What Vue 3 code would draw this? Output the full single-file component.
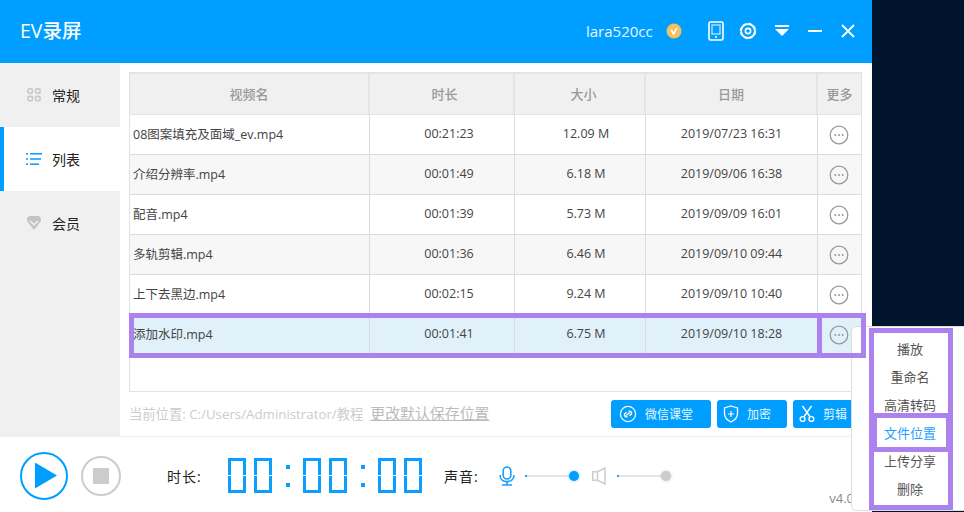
<script setup>
const navItems = [
  { label: "常规", icon: "grid" },
  { label: "列表", icon: "list", active: true },
  { label: "会员", icon: "gem" },
];

const videos = [
  { name: "08图案填充及面域_ev.mp4", time: "00:21:23", size: "12.09 M", date: "2019/07/23 16:31" },
  { name: "介绍分辨率.mp4", time: "00:01:49", size: "6.18 M", date: "2019/09/06 16:38" },
  { name: "配音.mp4", time: "00:01:39", size: "5.73 M", date: "2019/09/09 16:01" },
  { name: "多轨剪辑.mp4", time: "00:01:36", size: "6.46 M", date: "2019/09/10 09:44" },
  { name: "上下去黑边.mp4", time: "00:02:15", size: "9.24 M", date: "2019/09/10 10:40" },
  { name: "添加水印.mp4", time: "00:01:41", size: "6.75 M", date: "2019/09/10 18:28", selected: true },
];

const menu = ["播放", "重命名", "高清转码", "文件位置", "上传分享", "删除"];
const clock = [2, 2, 2];
</script>

<template>
  <div class="page">
    <div class="window">
      <header class="topbar">
        <div class="logo">EV录屏</div>
        <div class="user">lara520cc</div>
        <svg class="medal" width="16" height="16" viewBox="0 0 16 16">
          <circle cx="8" cy="8" r="7.5" fill="#f6c05f" />
          <path d="M5 6.5 L7.6 11 L10.8 5" fill="none" stroke="#fff" stroke-width="1.6" />
        </svg>
        <svg class="tool tablet" width="16" height="20" viewBox="0 0 16 20">
          <rect x="1" y="1" width="14" height="18" rx="1.5" fill="none" stroke="#fff" stroke-width="1.6" />
          <rect x="4" y="4" width="8" height="9" fill="none" stroke="#cfeaff" stroke-width="1.2" />
          <circle cx="8" cy="16" r="1" fill="#fff" />
        </svg>
        <svg class="tool gear" width="18" height="18" viewBox="0 0 18 18">
          <circle cx="9" cy="9" r="7.2" fill="none" stroke="#fff" stroke-width="2" stroke-dasharray="4.6 1" />
          <circle cx="9" cy="9" r="6.8" fill="none" stroke="#fff" stroke-width="1.6" />
          <circle cx="9" cy="9" r="2.6" fill="none" stroke="#fff" stroke-width="1.6" />
        </svg>
        <svg class="tool drop" width="16" height="12" viewBox="0 0 16 12">
          <rect x="1" y="0" width="14" height="2" fill="#fff" />
          <path d="M1 4 H15 L8 11 Z" fill="#fff" />
        </svg>
        <svg class="tool minus" width="14" height="12" viewBox="0 0 14 12">
          <rect x="0" y="5" width="14" height="2" fill="#fff" />
        </svg>
        <svg class="tool close" width="14" height="14" viewBox="0 0 14 14">
          <path d="M1 1 L13 13 M13 1 L1 13" stroke="#fff" stroke-width="1.8" fill="none" />
        </svg>
      </header>

      <div class="body">
        <nav class="sidebar">
          <div v-for="item in navItems" :key="item.label" class="nav-item" :class="{ active: item.active }">
            <svg v-if="item.icon === 'grid'" class="nav-icon" width="16" height="16" viewBox="0 0 16 16">
              <g fill="none" stroke="#c8c8c8" stroke-width="1.6">
                <rect x="2" y="1.8" width="4.4" height="4.4" rx="1.2" />
                <rect x="9.6" y="1.8" width="4.4" height="4.4" rx="1.2" />
                <rect x="2" y="9.4" width="4.4" height="4.4" rx="1.2" />
                <rect x="9.6" y="9.4" width="4.4" height="4.4" rx="1.2" />
              </g>
            </svg>
            <svg v-else-if="item.icon === 'list'" class="nav-icon" width="16" height="16" viewBox="0 0 16 16">
              <g fill="#1a9fff">
                <rect x="0" y="2" width="2" height="1.6" />
                <rect x="4" y="2" width="12" height="1.6" />
                <rect x="0" y="7.2" width="2" height="1.6" />
                <rect x="4" y="7.2" width="11" height="1.6" />
                <rect x="0" y="12.4" width="2" height="1.6" />
                <rect x="4" y="12.4" width="9" height="1.6" />
              </g>
            </svg>
            <svg v-else class="nav-icon" width="16" height="16" viewBox="0 0 16 16">
              <path d="M4 1 H12 C13.5 1 15 2.5 15 4.5 C15 6 14.4 7 13.5 8 L8 15 L2.5 8 C1.6 7 1 6 1 4.5 C1 2.5 2.5 1 4 1 Z" fill="#c4c4c4" />
              <path d="M4 6 L8 9.6 L12 6" fill="none" stroke="#f0f0f0" stroke-width="1.6" />
            </svg>
            <span>{{ item.label }}</span>
          </div>
        </nav>

        <main class="main">
          <div class="table">
            <div class="row head">
              <div class="cell">视频名</div>
              <div class="cell time">时长</div>
              <div class="cell size">大小</div>
              <div class="cell">日期</div>
              <div class="cell">更多</div>
            </div>
            <div v-for="(v, i) in videos" :key="v.name" class="row" :class="{ alt: i % 2 === 1, selected: v.selected }">
              <div class="cell name">{{ v.name }}</div>
              <div class="cell time">{{ v.time }}</div>
              <div class="cell size">{{ v.size }}</div>
              <div class="cell">{{ v.date }}</div>
              <div class="cell more">
                <svg width="20" height="20" viewBox="0 0 20 20">
                  <circle cx="10" cy="10" r="8.8" fill="none" stroke="#999" stroke-width="1.3" />
                  <circle cx="6.4" cy="10" r="1" fill="#999" />
                  <circle cx="10" cy="10" r="1" fill="#999" />
                  <circle cx="13.6" cy="10" r="1" fill="#999" />
                </svg>
              </div>
            </div>
          </div>

          <div class="actions">
            <div class="path">当前位置: C:/Users/Administrator/教程<a class="change">更改默认保存位置</a></div>
            <button class="btn wide">
              <svg width="18" height="18" viewBox="0 0 18 18">
                <circle cx="9" cy="9" r="7.6" fill="none" stroke="#fff" stroke-width="1.2" />
                <path d="M9.4 6.4 A2.1 2.1 0 0 1 12.4 8.9 L10.6 10.8 M8.6 11.6 A2.1 2.1 0 0 1 5.6 9.1 L7.4 7.2 M7.4 10.6 L10.6 7.4" fill="none" stroke="#fff" stroke-width="1.4" />
              </svg>
              微信课堂
            </button>
            <button class="btn">
              <svg width="16" height="18" viewBox="0 0 16 18">
                <path d="M8 1 L14.5 3 V9 C14.5 13 11 15.5 8 17 C5 15.5 1.5 13 1.5 9 V3 Z" fill="none" stroke="#fff" stroke-width="1.3" />
                <path d="M8 6 V12 M5 9 H11" stroke="#fff" stroke-width="1.2" />
              </svg>
              加密
            </button>
            <button class="btn">
              <svg width="16" height="18" viewBox="0 0 16 18">
                <circle cx="3.6" cy="14" r="2.4" fill="none" stroke="#fff" stroke-width="1.4" />
                <circle cx="12.4" cy="14" r="2.4" fill="none" stroke="#fff" stroke-width="1.4" />
                <path d="M4.8 12 L12.5 1 M11.2 12 L3.5 1" stroke="#fff" stroke-width="1.4" fill="none" />
              </svg>
              剪辑
            </button>
          </div>
        </main>
      </div>

      <footer class="footer">
        <div class="play"><span class="triangle"></span></div>
        <div class="stop"><span class="square"></span></div>
        <div class="label time-label">时长:</div>
        <div class="clock" role="timer" aria-label="00:00:00">
          <template v-for="(count, i) in clock" :key="i">
            <div v-if="i > 0" class="colon"><i></i><i></i></div>
            <div class="pair">
              <span v-for="j in count" :key="j" class="digit"></span>
            </div>
          </template>
        </div>
        <div class="label sound-label">声音:</div>
        <svg class="mic" width="16" height="20" viewBox="0 0 16 20">
          <rect x="4.2" y="1" width="7.6" height="12" rx="3.8" fill="none" stroke="#1a9fff" stroke-width="1.6" />
          <path d="M1 9 C1 13 4 15.6 8 15.6 C12 15.6 15 13 15 9" fill="none" stroke="#1a9fff" stroke-width="1.6" />
          <path d="M8 15.6 V18.6 M3 19 H13" stroke="#1a9fff" stroke-width="1.6" fill="none" />
        </svg>
        <div class="slider"><span class="knob"></span></div>
        <svg class="speaker" width="14" height="18" viewBox="0 0 14 18">
          <path d="M0.8 4.8 H5.5 V13.2 H0.8 Z M5.5 4.8 L13 1 V17 L5.5 13.2" fill="none" stroke="#cfcfcf" stroke-width="1.6" />
        </svg>
        <div class="slider off"><span class="knob"></span></div>
        <div class="version">v4.0</div>
      </footer>
    </div>

    <div class="popup">
      <div v-for="m in menu" :key="m" class="menu-item" :class="{ current: m === '文件位置' }">{{ m }}</div>
    </div>

    <div class="mark mark-row"></div>
    <div class="mark mark-more"></div>
    <div class="mark mark-menu"></div>
    <div class="mark mark-item"></div>
  </div>
</template>

<style>
html,
body {
  margin: 0;
  background: #00142e;
}
</style>

<style scoped>
.page {
  position: relative;
  width: 964px;
  height: 512px;
  overflow: hidden;
  background: #00142e;
  font-family: "Open Sans", "Noto Sans CJK SC", sans-serif;
}

.window {
  width: 872px;
  height: 512px;
  display: flex;
  flex-direction: column;
  background: #fff;
}

.topbar {
  height: 63px;
  flex: none;
  box-sizing: border-box;
  padding: 0 0 2px 20px;
  display: flex;
  align-items: center;
  background: #009fff;
  color: #fff;
}

.logo {
  font-size: 19.5px;
  font-weight: 500;
  width: 566px;
  margin-bottom: 2px;
}

.user {
  font-size: 15px;
  width: 80px;
  color: #e8f6ff;
}

.tool {
  flex: none;
}

.tablet {
  margin-left: 26px;
}

.gear {
  margin-left: 15px;
}

.drop {
  margin-left: 17px;
}

.minus {
  margin-left: 18px;
}

.close {
  margin-left: 19px;
}

.body {
  flex: 1;
  min-height: 0;
  display: flex;
}

.sidebar {
  width: 120px;
  flex: none;
  background: #f0f0f0;
}

.nav-item {
  height: 64px;
  display: flex;
  align-items: center;
  padding-left: 26px;
  gap: 10px;
  font-size: 14px;
  color: #222;
}

.nav-item.active {
  background: #fff;
  box-shadow: inset 4px 0 0 #009fff;
}

.main {
  flex: 1;
  min-width: 0;
  padding: 9px 9px 0 9px;
  display: flex;
  flex-direction: column;
}

.table {
  width: 733px;
  height: 320px;
  box-sizing: border-box;
  border: 1px solid #e2e2e2;
  border-top: 0;
}

.row {
  display: grid;
  grid-template-columns: 240px 145px 131px 172px 1fr;
  height: 40px;
  box-sizing: border-box;
  border-bottom: 1px solid #dcdcdc;
  font-size: 12.5px;
  color: #444;
}

.row.head {
  height: 43px;
  background: #f0f0f0;
  color: #999;
  font-size: 13px;
  font-weight: 500;
  border-top: 2px solid #e4e4e4;
  border-bottom: 1px solid #e4e4e4;
}

.row.alt {
  background: #f7f7f7;
}

.row.selected {
  background: #e0f1fa;
}

.cell {
  display: flex;
  align-items: center;
  justify-content: center;
  padding-bottom: 2px;
  border-right: 1px solid #dcdcdc;
  white-space: nowrap;
}

.cell.more {
  padding-bottom: 0;
  padding-right: 1px;
}

.cell.time {
  padding-left: 14px;
}

.cell.size {
  padding-left: 12px;
}

.head .cell {
  border-right: 2px solid #e4e4e4;
}

.head .cell.time {
  padding-left: 6px;
}

.head .cell.size {
  padding-left: 8px;
}

.cell:last-child,
.head .cell:last-child {
  border-right: 0;
}

.cell.name {
  justify-content: flex-start;
  padding-left: 3px;
}

.actions {
  flex: 1;
  display: flex;
  align-items: center;
  padding-bottom: 1px;
  gap: 6px;
}

.path {
  flex: 1;
  font-size: 13.3px;
  color: #ccc;
  white-space: nowrap;
  margin-bottom: 2px;
}

.change {
  margin-left: 7px;
  font-size: 14.9px;
  color: #bbb;
  text-decoration: underline;
}

.btn {
  width: 70px;
  height: 28px;
  flex: none;
  box-sizing: border-box;
  border: 0;
  border-radius: 3px;
  background: #009fff;
  color: #e8f6ff;
  font: inherit;
  font-size: 12px;
  display: flex;
  align-items: center;
  justify-content: center;
  gap: 8px;
  padding: 0 10px 0 0;
}

.btn.wide {
  width: 100px;
}

.footer {
  height: 76px;
  flex: none;
  box-sizing: border-box;
  border-top: 1px solid #eee;
  display: flex;
  align-items: center;
  padding: 2px 0 0 20px;
}

.play {
  width: 48px;
  height: 48px;
  box-sizing: border-box;
  border: 2.5px solid #009fff;
  border-radius: 50%;
  display: flex;
  align-items: center;
  justify-content: center;
}

.triangle {
  width: 22px;
  height: 26px;
  margin-left: 4px;
  background: #009fff;
  clip-path: polygon(0 0, 100% 50%, 0 100%);
}

.stop {
  width: 40px;
  height: 40px;
  margin-left: 13px;
  box-sizing: border-box;
  border: 2.5px solid #ccc;
  border-radius: 50%;
  display: flex;
  align-items: center;
  justify-content: center;
}

.square {
  width: 16px;
  height: 16px;
  background: #ccc;
}

.label {
  font-size: 14px;
  color: #222;
  letter-spacing: 1px;
  white-space: nowrap;
}

.time-label {
  margin-left: 46px;
  width: 61px;
}

.clock {
  display: flex;
  align-items: center;
  width: 194px;
}

.pair {
  display: flex;
  gap: 8px;
}

.digit {
  position: relative;
  width: 18px;
  height: 35px;
  box-sizing: border-box;
  border: 3px solid #0a9fff;
}

.digit::before {
  content: "";
  position: absolute;
  left: -3px;
  right: -3px;
  top: 14px;
  height: 1px;
  background: #fff;
}

.colon {
  width: 31px;
  height: 22px;
  display: flex;
  flex-direction: column;
  align-items: center;
  justify-content: space-between;
}

.colon i {
  width: 4px;
  height: 4px;
  background: #0a9fff;
}

.sound-label {
  margin-left: 22px;
  width: 55px;
}

.slider {
  position: relative;
  width: 49px;
  height: 2px;
  margin-left: 10px;
  background: #e6e6e6;
  box-shadow: inset 2px 0 0 #1a9fff;
}

.knob {
  position: absolute;
  right: -5px;
  top: -4px;
  width: 10px;
  height: 10px;
  border-radius: 50%;
  background: #009fff;
  box-shadow: 0 0 3px rgba(0, 159, 255, 0.5);
}

.speaker {
  margin-left: 18px;
}

.slider.off {
  margin-left: 11px;
}

.slider.off .knob {
  background: #ccc;
  box-shadow: 0 0 3px rgba(0, 0, 0, 0.2);
}

.version {
  align-self: flex-end;
  margin-left: auto;
  margin-bottom: 5px;
  margin-right: 18px;
  font-size: 13px;
  color: #888;
}

.popup {
  position: absolute;
  left: 851px;
  top: 326px;
  width: 118px;
  height: 185px;
  box-sizing: border-box;
  padding-top: 8px;
  background: #fff;
  border: 1px solid #ddd;
  border-radius: 5px;
}

.menu-item {
  height: 28px;
  line-height: 28px;
  text-align: center;
  font-size: 13px;
  color: #555;
}

.menu-item.current {
  color: #1e9fff;
}

.mark {
  position: absolute;
  box-sizing: border-box;
  border: 5px solid #ac82ee;
}

.mark-row {
  left: 129px;
  top: 313px;
  width: 693px;
  height: 45px;
}

.mark-more {
  left: 817px;
  top: 313px;
  width: 49px;
  height: 45px;
}

.mark-menu {
  left: 869px;
  top: 328px;
  width: 84px;
  height: 182px;
}

.mark-item {
  left: 872px;
  top: 413px;
  width: 79px;
  height: 39px;
}
</style>
